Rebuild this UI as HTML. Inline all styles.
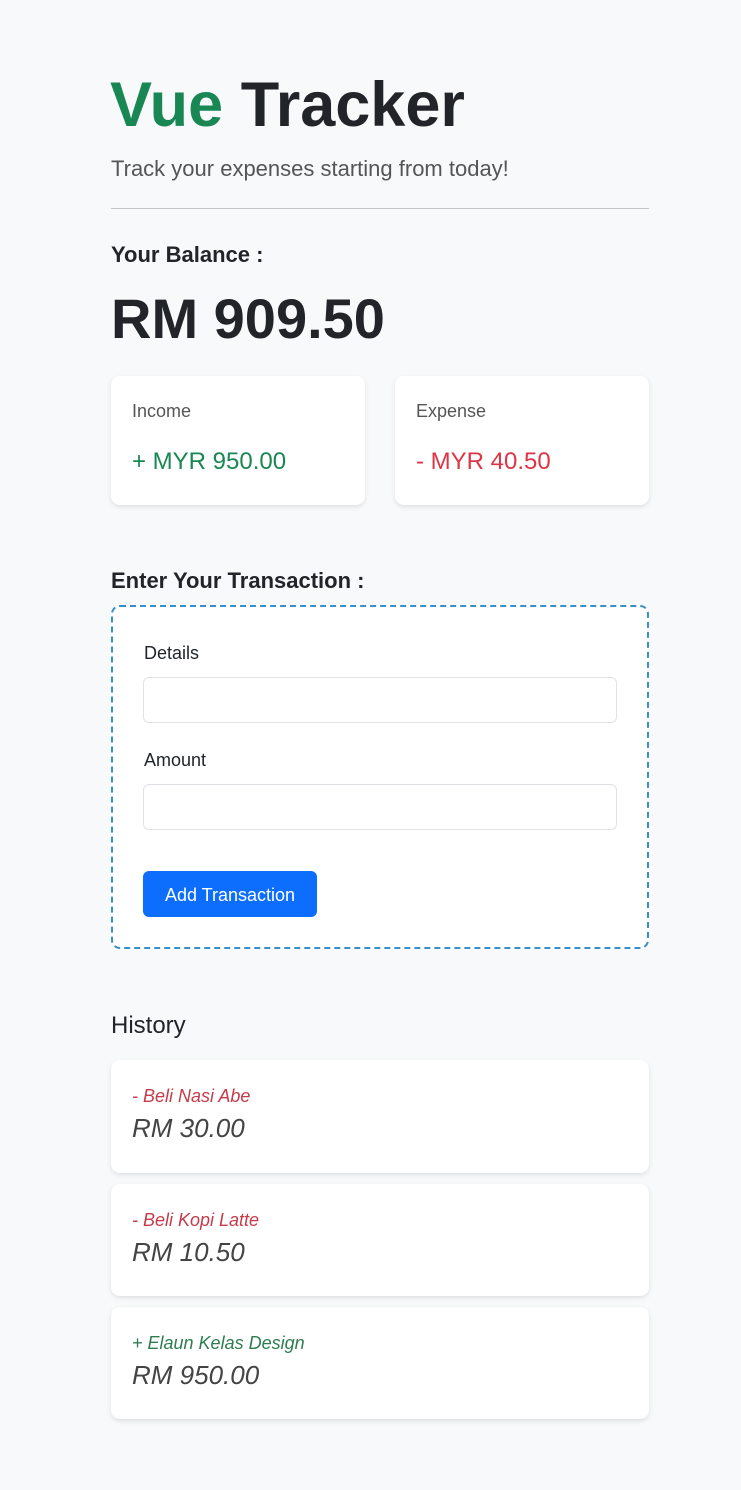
<!DOCTYPE html>
<html><head><meta charset="utf-8"><style>
*{box-sizing:border-box;margin:0;padding:0}
body{width:741px;height:1490px;background:#f8f9fa;font-family:"Liberation Sans",sans-serif;color:#212529;position:relative;overflow:hidden}
.a{position:absolute;white-space:nowrap;line-height:1}
.card{position:absolute;background:#fff;border-radius:9px;box-shadow:0 2px 5px rgba(0,0,0,.1)}
.inp{position:absolute;left:143px;width:474px;height:46px;border:1px solid #dee2e6;border-radius:6px;background:#fff}
</style></head><body>
<div class="a" style="left:110px;top:74px;font-size:63px;font-weight:bold"><span style="color:#198754">Vue</span> Tracker</div>
<div class="a" style="left:111px;top:158px;font-size:22px;color:#555;font-weight:300">Track your expenses starting from today!</div>
<div style="position:absolute;left:111px;top:208px;width:538px;height:1px;background:#c4c5c7"></div>
<div class="a" style="left:111px;top:244px;font-size:22px;font-weight:600">Your Balance :</div>
<div class="a" style="left:111px;top:291px;font-size:56px;font-weight:bold">RM 909.50</div>
<div class="card" style="left:111px;top:376px;width:254px;height:129px"></div>
<div class="card" style="left:395px;top:376px;width:254px;height:129px"></div>
<div class="a" style="left:132px;top:402px;font-size:18px;color:#555">Income</div>
<div class="a" style="left:132px;top:450px;font-size:24px;color:#198754">+ MYR 950.00</div>
<div class="a" style="left:416px;top:402px;font-size:18px;color:#555">Expense</div>
<div class="a" style="left:416px;top:450px;font-size:24px;color:#dc3545">- MYR 40.50</div>
<div class="a" style="left:111px;top:570px;font-size:22px;font-weight:600">Enter Your Transaction :</div>
<div style="position:absolute;left:111px;top:605px;width:538px;height:344px;border:2px dashed #3a8fc7;border-radius:9px;background:#fff"></div>
<div class="a" style="left:144px;top:644px;font-size:18px">Details</div>
<div class="inp" style="top:677px"></div>
<div class="a" style="left:144px;top:751px;font-size:18px">Amount</div>
<div class="inp" style="top:784px"></div>
<div style="position:absolute;left:143px;top:871px;width:174px;height:46px;background:#0d6efd;border-radius:6px;color:#fff;font-size:18px;line-height:48px;text-align:center">Add Transaction</div>
<div class="a" style="left:111px;top:1014px;font-size:24px">History</div>
<div class="card" style="left:111px;top:1060px;width:538px;height:113px"></div>
<div class="a" style="left:132px;top:1087px;font-size:18px;font-style:italic;color:#c43c4a">- Beli Nasi Abe</div>
<div class="a" style="left:132px;top:1115px;font-size:26px;font-style:italic;color:#444">RM 30.00</div>
<div class="card" style="left:111px;top:1184px;width:538px;height:112px"></div>
<div class="a" style="left:132px;top:1211px;font-size:18px;font-style:italic;color:#c43c4a">- Beli Kopi Latte</div>
<div class="a" style="left:132px;top:1239px;font-size:26px;font-style:italic;color:#444">RM 10.50</div>
<div class="card" style="left:111px;top:1307px;width:538px;height:112px"></div>
<div class="a" style="left:132px;top:1334px;font-size:18px;font-style:italic;color:#2e7d52">+ Elaun Kelas Design</div>
<div class="a" style="left:132px;top:1362px;font-size:26px;font-style:italic;color:#444">RM 950.00</div>
</body></html>
